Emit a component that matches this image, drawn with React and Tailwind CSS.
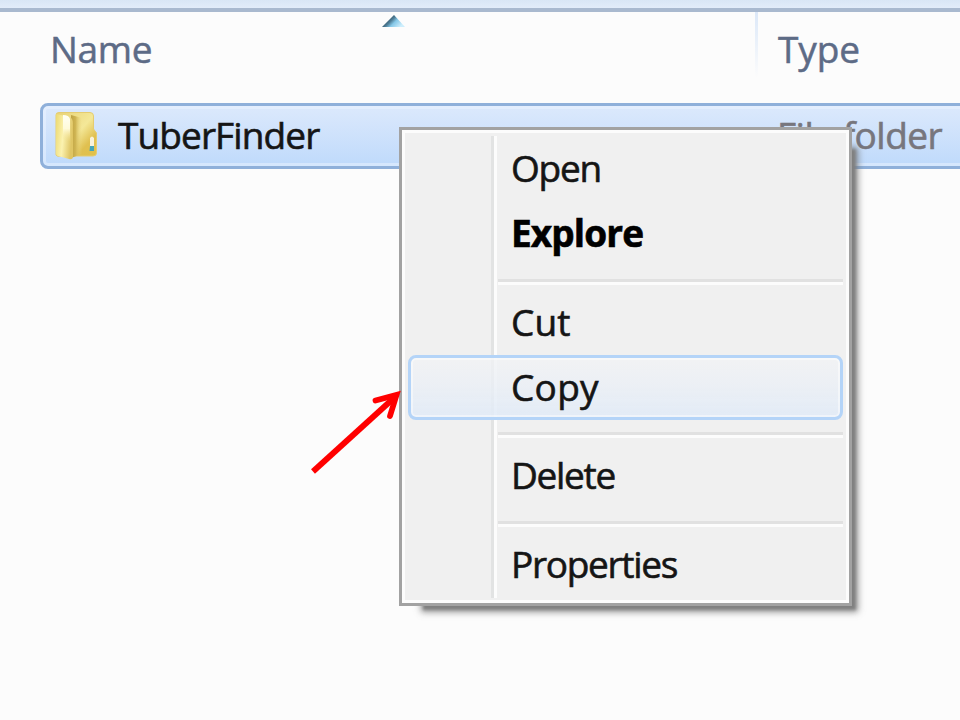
const menuGroups = [
  [
    { label: "Open", text: "tracking-[-1.2px]" },
    { label: "Explore", text: "font-bold text-black tracking-[-0.9px]" },
  ],
  [
    { label: "Cut", text: "tracking-[0.1px]" },
    { label: "Copy", text: "tracking-[0.3px]", active: true },
  ],
  [{ label: "Delete", text: "tracking-[-1.3px]" }],
  [{ label: "Properties", text: "tracking-[-1.3px]" }],
];

function FolderIcon() {
  return (
    <svg className="block h-[52px] w-[46px] shrink-0" viewBox="0 0 46 52">
      <defs>
        <linearGradient id="back" x1="0" y1="0" x2="1" y2="1">
          <stop offset="0" stopColor="#e8d276" />
          <stop offset="0.5" stopColor="#f4e898" />
          <stop offset="0.75" stopColor="#e0c050" />
          <stop offset="1" stopColor="#e2c14a" />
        </linearGradient>
        <linearGradient id="front" x1="0" y1="0" x2="1" y2="0.25">
          <stop offset="0" stopColor="#ecd970" />
          <stop offset="0.5" stopColor="#fbf2b0" />
          <stop offset="1" stopColor="#dfc564" />
        </linearGradient>
        <linearGradient id="shine" x1="0" y1="0" x2="0" y2="1">
          <stop offset="0" stopColor="#fffff4" />
          <stop offset="0.5" stopColor="#fffbd9" />
          <stop offset="1" stopColor="#f2e08a" stopOpacity="0" />
        </linearGradient>
        <linearGradient id="fold" x1="0" y1="0" x2="1" y2="0">
          <stop offset="0" stopColor="#bfa344" />
          <stop offset="0.4" stopColor="#cfb452" />
          <stop offset="1" stopColor="#ecd982" stopOpacity="0" />
        </linearGradient>
      </defs>
      <path d="M3 5Q3 2.500 6 2.500H37Q40.500 2.500 40.500 6V19L43.500 23V43Q43.500 46 40 46H8Q4 47 3 45Z" fill="url(#back)" stroke="#e5cc70" strokeWidth="1" />
      <path d="M18 5L29 8V44L18 48Z" fill="url(#fold)" />
      <path d="M3 4L17 7Q20 9 20 13V46Q20 50 16 49L5 46Q3 45 3 43Z" fill="url(#front)" />
      <path d="M10 5Q16 5 17 9V32L10 29Z" fill="url(#shine)" />
      <path d="M37 28Q39 25 41 28V37H37Z" fill="#f8f2dc" />
      <path d="M37 36H41V41H36.500Z" fill="#45a5b8" />
    </svg>
  );
}

function Separator() {
  return (
    <div className="h-[23.3px] pt-[12px] pl-[90px]">
      <div className="h-[6px] w-full border-t-[3px] border-[#e1e1e1] bg-[#fcfcfc]" />
    </div>
  );
}

function MenuItem({ label, text, active }) {
  return (
    <div
      className={`flex h-[65.3px] items-center rounded-[8px] border-[3px] pl-[100px] ${
        active
          ? "border-[#b4d4f8] bg-linear-to-b from-[#f2f3f5]/80 via-[#eaeff6]/80 to-[#e1ebf7]/90 shadow-[inset_0_0_0_2px_rgba(255,255,255,0.45)]"
          : "border-transparent"
      }`}
    >
      <span className={`-mt-[2px] text-[37px] leading-[50px] text-[#151515] ${text}`}>{label}</span>
    </div>
  );
}

function ContextMenu() {
  return (
    <div className="absolute top-[127px] left-[399px] h-[479px] w-[453px]">
      <div className="absolute top-[22px] right-[-4px] bottom-[-4px] left-[24px] bg-[#808080] shadow-[0_0_6px_2px_rgba(110,110,110,0.75)] blur-[1.5px]" />
      <div className="relative h-full border-[3px] border-[#a2a2a2] bg-[#fcfcfc] p-[3px]">
        <div className="relative h-full bg-[#f0f0f0] px-[3px] pt-[3px]">
          <div className="absolute top-[3px] bottom-[2px] left-[86px] w-[6px] border-l-[3px] border-[#e2e3e3] bg-[#fcfcfc]" />
          <div className="relative [-webkit-text-stroke:0.6px]">
            {menuGroups.map((items, i) => (
              <div key={i}>
                {i > 0 && <Separator />}
                {items.map((item) => (
                  <MenuItem key={item.label} {...item} />
                ))}
              </div>
            ))}
          </div>
        </div>
      </div>
    </div>
  );
}

export default function App() {
  return (
    <div className="relative h-[720px] w-[960px] overflow-hidden bg-[#fcfcfc] font-['Open_Sans','Noto_Sans',sans-serif]">
      <div className="h-[12px] border-b-[4px] border-[#a9b9cf] bg-linear-to-b from-[#d9e6f5] to-[#e2ecf9]" />
      <div className="flex h-[91px] text-[37px] leading-[50px] text-[#5d6b86] [-webkit-text-stroke:0.5px]">
        <div className="relative w-[755px] pt-[12px] pl-[50px]">
          <span className="tracking-[-0.3px]">Name</span>
          <svg className="absolute top-[2px] left-[382px] h-[14px] w-[24px]" viewBox="0 0 24 14">
            <defs>
              <linearGradient id="sort" gradientUnits="userSpaceOnUse" x1="5" y1="6" x2="15" y2="16">
                <stop offset="0" stopColor="#35566a" />
                <stop offset="0.25" stopColor="#4f7f98" />
                <stop offset="0.5" stopColor="#86c8e8" />
                <stop offset="1" stopColor="#cdeefc" />
              </linearGradient>
            </defs>
            <path d="M0 13L12 1L23 13Z" fill="url(#sort)" />
          </svg>
        </div>
        <div className="h-[66px] w-[3px] bg-linear-to-b from-[#dce8f8] to-[#fcfcfc]" />
        <div className="pt-[12px] pl-[20px] tracking-[-0.1px]">Type</div>
      </div>
      <div className="ml-[40px] flex h-[66px] w-[940px] items-center rounded-[8px] border-[3px] border-[#8fb0da] bg-linear-to-b from-[#dce9fc] to-[#bfdafb] pl-[10px] text-[37px] leading-[50px] shadow-[inset_0_0_0_3px_rgba(235,244,255,0.5)] [-webkit-text-stroke:0.6px]">
        <FolderIcon />
        <span className="-mt-[2px] w-[678px] shrink-0 pl-[19px] tracking-[-0.9px] text-[#151515]">TuberFinder</span>
        <span className="-mt-[2px] whitespace-nowrap tracking-[-0.5px] text-[#77767d]">File folder</span>
      </div>
      <ContextMenu />
      <svg className="absolute top-[380px] left-[300px] h-[100px] w-[110px]" viewBox="0 0 110 100" fill="none" stroke="#ff0000" strokeWidth="5.8">
        <path d="M13 91.500L95 17" />
        <path d="M75.500 20.500L96.500 15L90 36" strokeLinecap="round" strokeLinejoin="miter" />
      </svg>
    </div>
  );
}
